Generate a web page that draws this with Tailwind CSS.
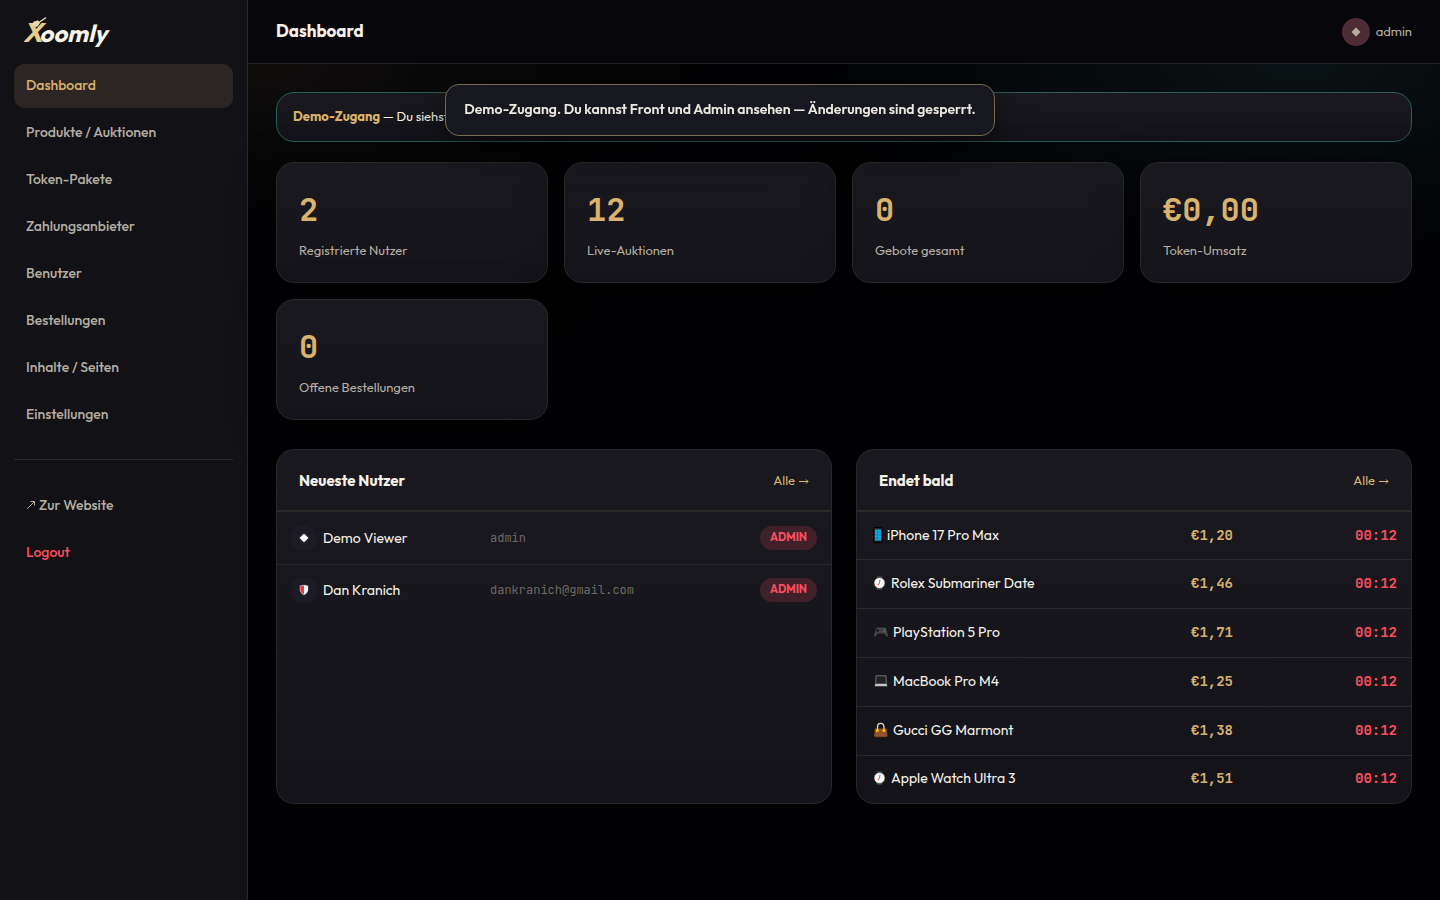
<!DOCTYPE html>
<html lang="de">
<head>
  <meta charset="UTF-8"/>
  <meta name="viewport" content="width=device-width, initial-scale=1.0"/>
  <title>Dashboard – Xoomly Admin</title>
  <script src="https://cdn.jsdelivr.net/npm/@tailwindcss/browser@4"></script>
</head>
<body class="min-h-screen bg-[#020204] font-[Outfit,Lato,sans-serif] text-[#f5f1e8]">

  <!-- Toast -->
  <div role="status" class="fixed top-[84px] left-1/2 z-10 flex h-[52px] w-[550px] -translate-x-1/2 items-center justify-center rounded-[14px] border border-[#7a6a4d] bg-[#171720] pb-0.5 text-sm font-semibold whitespace-nowrap text-[#ece8e0] shadow-[0_10px_40px_rgba(0,0,0,0.6)]">
    Demo-Zugang. Du kannst Front und Admin ansehen — Änderungen sind gesperrt.
  </div>

  <div class="flex min-h-screen">
    <!-- Sidebar -->
    <aside class="w-[248px] shrink-0 border-r border-[#29282b] bg-[#111116] px-3.5">
      <a href="#" aria-label="Xoomly" class="flex h-16 items-center px-2.5">
        <svg class="h-10 w-[90px]" viewBox="0 0 90 40">
          <text x="-1" y="30" font-family="Outfit, Lato, sans-serif" font-size="24" font-weight="700" font-style="italic" fill="#f8f4ea"><tspan font-size="27" fill="#e8cc8e">X</tspan><tspan dx="-3">oomly</tspan></text>
          <path d="M9 10l5-1.800 2 2.800-2.400 3.400-2.600.6-2-2.200z" fill="#efd9aa"/>
          <path d="M14 11l7.500-5" stroke="#efd9aa" stroke-width="1.500" stroke-linecap="round"/>
        </svg>
      </a>
      <nav class="flex flex-col gap-[3px] text-sm font-medium text-[#b5afa3]">
        <a href="#" aria-current="page" class="flex h-11 items-center rounded-[10px] bg-[#2b2623] px-3 pb-0.5 text-[#d9b26d]">Dashboard</a>
        <a href="#" class="flex h-11 items-center px-3 pb-0.5">Produkte / Auktionen</a>
        <a href="#" class="flex h-11 items-center px-3 pb-0.5">Token-Pakete</a>
        <a href="#" class="flex h-11 items-center px-3 pb-0.5">Zahlungsanbieter</a>
        <a href="#" class="flex h-11 items-center px-3 pb-0.5">Benutzer</a>
        <a href="#" class="flex h-11 items-center px-3 pb-0.5">Bestellungen</a>
        <a href="#" class="flex h-11 items-center px-3 pb-0.5">Inhalte / Seiten</a>
        <a href="#" class="flex h-11 items-center px-3 pb-0.5">Einstellungen</a>
        <hr class="mt-[19px] mb-[21px] border-[#29282b]"/>
        <a href="#" class="flex h-11 items-center gap-[3px] px-3 pb-0.5">
          <svg class="size-2.5" viewBox="0 0 10 10" fill="none" stroke="currentColor"><path d="M1 9l7-7M4.500 1.500h4v4"/></svg>
          Zur Website
        </a>
        <a href="#" class="flex h-11 items-center px-3 pb-0.5 text-[#ff4d5e]">Logout</a>
      </nav>
    </aside>

    <div class="flex min-w-0 flex-1 flex-col">
      <header class="flex h-16 items-center justify-between border-b border-[#222124] bg-[#06060b] px-7">
        <h1 class="pb-0.5 text-[17px] font-bold">Dashboard</h1>
        <div class="flex items-center gap-1.5 text-[13px] text-[#b5afa3]">
          <span class="flex size-7 items-center justify-center rounded-full bg-[#4f2b35]">
            <svg class="size-2.5" viewBox="0 0 10 10" fill="currentColor"><path d="M5 .5L9.500 5 5 9.500 .5 5z"/></svg>
          </span>
          admin
        </div>
      </header>

      <main class="flex-1 bg-[radial-gradient(ellipse_500px_200px_at_88%_0,#091214,transparent),radial-gradient(ellipse_500px_160px_at_0_0,#0f0d0c,transparent)] p-7">
        <div class="mb-5 flex h-[50px] items-center rounded-[18px] border border-[#2b5f58] bg-linear-to-b from-[#1a191f] to-[#141319] px-4 text-[13px]">
          <p class="whitespace-nowrap"><strong class="font-bold text-[#d9b26d]">Demo-Zugang</strong> — Du siehst</p>
        </div>

        <!-- Stats -->
        <div id="stats" class="mb-[29px] grid grid-cols-4 gap-4"></div>

        <!-- Panels -->
        <div class="grid grid-cols-2 gap-6">
          <section class="overflow-hidden rounded-[18px] border border-[#29282b] bg-linear-to-b from-[#1a191f] to-[#141319]">
            <div class="flex h-[62px] items-center justify-between border-b-2 border-[#2b2b2b] px-[22px] pt-0.5">
              <h2 class="text-[15px] font-bold">Neueste Nutzer</h2>
              <a href="#" class="flex items-center gap-1 text-[13px] text-[#d9b26d]">Alle <svg class="h-2 w-2.5" viewBox="0 0 10 8" fill="none" stroke="currentColor"><path d="M0 4.500h9M7 2.500l2 2-2 2"/></svg></a>
            </div>
            <table class="w-full text-sm">
              <tbody id="users"></tbody>
            </table>
          </section>

          <section class="overflow-hidden rounded-[18px] border border-[#29282b] bg-linear-to-b from-[#1a191f] to-[#141319]">
            <div class="flex h-[62px] items-center justify-between border-b-2 border-[#2b2b2b] px-[22px] pt-0.5">
              <h2 class="text-[15px] font-bold">Endet bald</h2>
              <a href="#" class="flex items-center gap-1 text-[13px] text-[#d9b26d]">Alle <svg class="h-2 w-2.5" viewBox="0 0 10 8" fill="none" stroke="currentColor"><path d="M0 4.500h9M7 2.500l2 2-2 2"/></svg></a>
            </div>
            <table class="h-[291px] w-full text-sm">
              <tbody id="auctions"></tbody>
            </table>
          </section>
        </div>
      </main>
    </div>
  </div>

  <script>
    const stats = [
      { value: "2", label: "Registrierte Nutzer" },
      { value: "12", label: "Live-Auktionen" },
      { value: "0", label: "Gebote gesamt" },
      { value: "€0,00", label: "Token-Umsatz" },
      { value: "0", label: "Offene Bestellungen" },
    ];

    const diamond = `<svg class="size-2.5" viewBox="0 0 10 10" fill="#fff"><path d="M5 .5L9.500 5 5 9.500 .5 5z"/></svg>`;
    const shield = `<svg class="h-3 w-2.5" viewBox="0 0 10 12"><path d="M5 .5L9.500 1.500V5.500C9.500 8.500 7 10.500 5 11.500 3 10.500 .5 8.500 .5 5.500V1.500z" fill="#f4f4f4" stroke="#08080a" stroke-width=".6"/><path d="M5 1.500L1.300 2.200V5.500c0 2 1.700 4 3.700 5z" fill="#ee3344"/></svg>`;

    const users = [
      { icon: diamond, name: "Demo Viewer", mail: "admin" },
      { icon: shield, name: "Dan Kranich", mail: "dankranich@gmail.com" },
    ];

    const phone = `<svg class="h-4 w-2.5" viewBox="0 0 10 16"><rect x=".5" y=".5" width="9" height="15" rx="1" fill="#222" stroke="#000"/><path d="M2 2.500h6v11H2z" fill="#08b2ed"/><path d="M2 5h6M2 8h6M2 11h6M4.500 2.500v11" stroke="#0a6d94" stroke-width=".6"/></svg>`;
    const watch = `<svg class="h-4 w-3.5" viewBox="0 0 14 16"><path d="M4 1h5l1 2v10l-1 2H4l-1-2V3z" fill="#4a4a4a" stroke="#111" stroke-width=".6"/><circle cx="6.500" cy="8" r="5.500" fill="#f6f6f6" stroke="#29292c" stroke-width=".6"/><path d="M7 4.500L6.500 8" stroke="#777" stroke-width=".9"/><path d="M6.500 8L5 10" stroke="#e53935"/></svg>`;
    const gamepad = `<svg class="h-3 w-4" viewBox="0 0 16 12"><path d="M4 1h8l1.500 1.500L15.500 9v2h-2L11 8H5l-2.500 3h-2V9l2-6.500z" fill="#434345" stroke="#08080a" stroke-width=".6"/><path d="M4.500 3v3M3 4.500h3" stroke="#151515"/><circle cx="11.500" cy="3" r=".7" fill="#2b8a8c"/><circle cx="12.500" cy="4.500" r=".7" fill="#c2453f"/><circle cx="11" cy="5.500" r=".7" fill="#888"/></svg>`;
    const laptop = `<svg class="h-3 w-4" viewBox="0 0 16 12"><path d="M3 .8h10l.3 8.200H2.700z" fill="#222" stroke="#858585" stroke-width=".8"/><path d="M2.500 9h11l1 2.200h-13z" fill="#c4c4c4"/></svg>`;
    const bag = `<svg class="h-4 w-4" viewBox="0 0 16 16"><path d="M2 6.500h11.500l1 7.500-1 1H2l-1-1z" fill="#945427" stroke="#4a2815" stroke-width=".6"/><path d="M4.500 8V5q0-3.700 3.200-3.700T11 5v3" fill="none" stroke="#e7d8bd" stroke-width="1.300"/><circle cx="4.300" cy="8.500" r="1.600" fill="#ffb60a"/><circle cx="11" cy="8.500" r="1.600" fill="#ffb60a"/></svg>`;

    const auctions = [
      { icon: phone, name: "iPhone 17 Pro Max", price: "€1,20" },
      { icon: watch, name: "Rolex Submariner Date", price: "€1,46" },
      { icon: gamepad, name: "PlayStation 5 Pro", price: "€1,71" },
      { icon: laptop, name: "MacBook Pro M4", price: "€1,25" },
      { icon: bag, name: "Gucci GG Marmont", price: "€1,38" },
      { icon: watch, name: "Apple Watch Ultra 3", price: "€1,51" },
    ];

    document.getElementById("stats").innerHTML = stats.map(s => `
      <div class="h-[121px] rounded-[18px] border border-[#29282b] bg-linear-to-b from-[#1a191f] to-[#141319] px-[22px] pt-[26px] shadow-[0_10px_40px_rgba(0,0,0,0.5)]">
        <div class="font-['JetBrains_Mono','DejaVu_Sans_Mono',monospace] text-[32px] leading-[42px] font-bold text-[#d9b26d]">${s.value}</div>
        <div class="mt-[9px] text-[13px] leading-5 text-[#b5afa3]">${s.label}</div>
      </div>
    `).join('');

    document.getElementById("users").innerHTML = users.map(u => `
      <tr class="h-[52px] border-b border-[#2b2b2b] last:border-b-0">
        <td class="w-[199px] pl-3.5"><span class="flex items-center gap-1.5"><span class="flex size-[26px] items-center justify-center rounded-full bg-[#1c1c27]">${u.icon}</span>${u.name}</span></td>
        <td class="pl-3.5 font-['JetBrains_Mono','DejaVu_Sans_Mono',monospace] text-xs text-[#6e6a64]">${u.mail}</td>
        <td class="pr-3.5 text-right"><span class="inline-flex h-6 items-center rounded-full bg-[#40212a] px-2.5 align-middle text-[11px] font-bold text-[#ff4d5e]">ADMIN</span></td>
      </tr>
    `).join('');

    document.getElementById("auctions").innerHTML = auctions.map(a => `
      <tr class="border-b border-[#2b2b2b] last:border-b-0">
        <td class="pb-0.5 pl-4"><span class="flex items-center gap-1">${a.icon}${a.name}</span></td>
        <td class="w-[120px] pb-0.5 font-['JetBrains_Mono','DejaVu_Sans_Mono',monospace] text-sm font-bold text-[#d9b26d]">${a.price}</td>
        <td class="w-[100px] pr-3.5 pb-0.5 text-right font-['JetBrains_Mono','DejaVu_Sans_Mono',monospace] text-sm font-bold text-[#ff4d5e]">00:12</td>
      </tr>
    `).join('');
  </script>

</body>
</html>
